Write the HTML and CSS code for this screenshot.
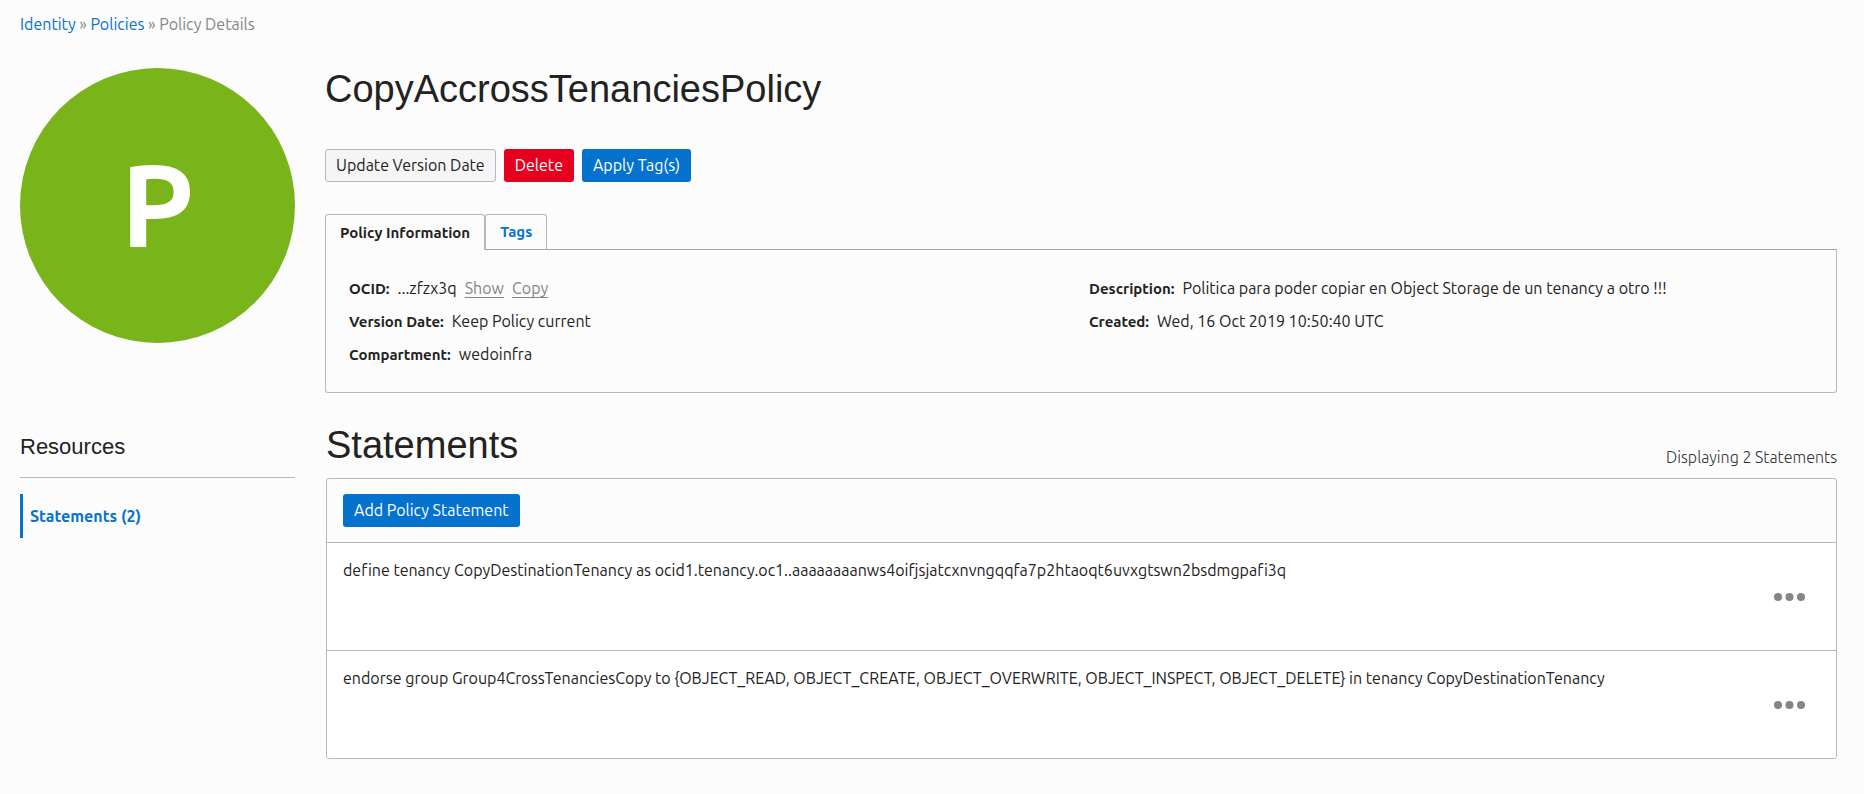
FILE: index.html
```html
<!DOCTYPE html>
<html lang="en">
<head>
<meta charset="utf-8">
<title>Policy Details</title>
<link rel="stylesheet" href="styles.css">
</head>
<body>
<nav class="breadcrumb" aria-label="Breadcrumb"><a href="#">Identity</a> » <a href="#">Policies</a> » <span>Policy Details</span></nav>
<div class="layout">
  <aside class="sidebar">
    <div class="avatar">P</div>
    <h3 class="side-title">Resources</h3>
    <a class="side-link" href="#statements">Statements (2)</a>
  </aside>
  <main class="main">
    <h1 class="title">CopyAccrossTenanciesPolicy</h1>
    <div class="actions">
      <button class="btn btn-plain" type="button">Update Version Date</button>
      <button class="btn btn-danger" type="button">Delete</button>
      <button class="btn btn-primary" type="button">Apply Tag(s)</button>
    </div>
    <div class="tabs" role="tablist">
      <button class="tab tab-active" type="button" role="tab" aria-selected="true">Policy Information</button>
      <button class="tab" type="button" role="tab" aria-selected="false">Tags</button>
    </div>
    <section class="panel">
      <dl class="facts">
        <div class="fact"><dt>OCID:</dt><dd>...zfzx3q</dd><dd><a href="#">Show</a></dd><dd><a href="#">Copy</a></dd></div>
        <div class="fact"><dt>Version Date:</dt><dd>Keep Policy current</dd></div>
        <div class="fact"><dt>Compartment:</dt><dd>wedoinfra</dd></div>
      </dl>
      <dl class="facts">
        <div class="fact"><dt>Description:</dt><dd>Politica para poder copiar en Object Storage de un tenancy a otro !!!</dd></div>
        <div class="fact"><dt>Created:</dt><dd>Wed, 16 Oct 2019 10:50:40 UTC</dd></div>
      </dl>
    </section>
    <section class="statements" id="statements">
      <div class="list-head">
        <h2 class="title">Statements</h2>
        <span class="count">Displaying 2 Statements</span>
      </div>
      <div class="list">
        <div class="toolbar"><button class="btn btn-primary" type="button">Add Policy Statement</button></div>
        <div class="row">
          <p class="statement">define tenancy CopyDestinationTenancy as ocid1.tenancy.oc1..aaaaaaaanws4oifjsjatcxnvngqqfa7p2htaoqt6uvxgtswn2bsdmgpafi3q</p>
          <button class="more" type="button" aria-label="Actions"><svg width="31" height="8" viewBox="0 0 31 8"><circle cx="4" cy="4" r="4"/><circle cx="15.500" cy="4" r="4"/><circle cx="27" cy="4" r="4"/></svg></button>
        </div>
        <div class="row">
          <p class="statement">endorse group Group4CrossTenanciesCopy to {OBJECT_READ, OBJECT_CREATE, OBJECT_OVERWRITE, OBJECT_INSPECT, OBJECT_DELETE} in tenancy CopyDestinationTenancy</p>
          <button class="more" type="button" aria-label="Actions"><svg width="31" height="8" viewBox="0 0 31 8"><circle cx="4" cy="4" r="4"/><circle cx="15.500" cy="4" r="4"/><circle cx="27" cy="4" r="4"/></svg></button>
        </div>
      </div>
    </section>
  </main>
</div>
</body>
</html>
```
FILE: styles.css
```css
* { box-sizing: border-box; }
body {
  margin: 0;
  padding: 12px 27px 35px 20px;
  background: #fcfcfc;
  color: #222;
  font: 16px/24px Ubuntu, "Noto Sans", sans-serif;
  font-variant-ligatures: none;
}
h1, h2, h3, p, dl, dd { margin: 0; }
a { color: #0572ce; text-decoration: none; }
button { font: inherit; cursor: pointer; }

.breadcrumb { color: #858585; }

.layout {
  display: grid;
  grid-template-columns: 275px minmax(0, 1fr);
  column-gap: 30px;
  margin-top: 32px;
}

.avatar {
  display: flex;
  align-items: center;
  justify-content: center;
  aspect-ratio: 1;
  padding-bottom: 4px;
  border-radius: 50%;
  background: #78b41a;
  color: #fff;
  font-size: 116px;
  font-weight: 700;
  line-height: 1;
}
.side-title {
  margin-top: 88px;
  padding-bottom: 14px;
  border-bottom: 1px solid #b3b8c1;
  font: 22px/32px "Liberation Sans", Arial, sans-serif;
}
.side-link {
  display: block;
  margin-top: 16px;
  padding: 10px 7px;
  border-left: 3px solid #0572ce;
  font-weight: 700;
}

.title { font: 38px/42px "Liberation Sans", Arial, sans-serif; }

.actions { display: flex; gap: 8px; margin-top: 39px; }
.btn {
  height: 33px;
  padding: 0 10px;
  border: 1px solid transparent;
  border-radius: 3px;
  line-height: 31px;
}
.btn-plain { background: #f5f5f5; border-color: #b3b8c1; color: #222; }
.btn-danger { background: #e6001f; color: #fff; }
.btn-primary { background: #0572ce; color: #fff; }

.tabs { display: flex; margin-top: 32px; }
.tab {
  height: 35px;
  padding: 0 14px;
  border: 1px solid #b3b8c1;
  border-bottom: 0;
  border-radius: 3px 3px 0 0;
  background: #fcfcfc;
  color: #0572ce;
  font-size: 15px;
  font-weight: 700;
}
.tab-active { position: relative; height: 36px; margin-bottom: -1px; color: #222; }

.panel {
  display: grid;
  grid-template-columns: 1fr 1fr;
  padding: 22px 23px 21px;
  border: 1px solid #b3b8c1;
  border-top-color: #a5a5a5;
  border-radius: 0 0 3px 3px;
}
.facts { line-height: 33px; }
.facts + .facts { padding-left: 8px; }
.fact { display: flex; gap: 8px; }
.fact dt { font-size: 15px; font-weight: 700; }
.fact a { color: #858585; text-decoration: underline; text-underline-offset: 3px; }

.statements { padding-left: 1px; }
.list-head {
  display: flex;
  justify-content: space-between;
  align-items: flex-end;
  margin: 31px 0 12px;
}
.count { color: #333; font-weight: 300; line-height: 18px; }

.list { border: 1px solid #b3b8c1; border-radius: 3px; overflow: hidden; }
.toolbar { padding: 15px 16px; }
.row {
  display: flex;
  justify-content: space-between;
  min-height: 108px;
  padding: 15px 31px 15px 16px;
  border-top: 1px solid #b3b8c1;
  background: #fff;
}
.more {
  display: flex;
  align-items: center;
  align-self: center;
  padding: 0;
  border: 0;
  background: none;
  fill: #858585;
}
```
